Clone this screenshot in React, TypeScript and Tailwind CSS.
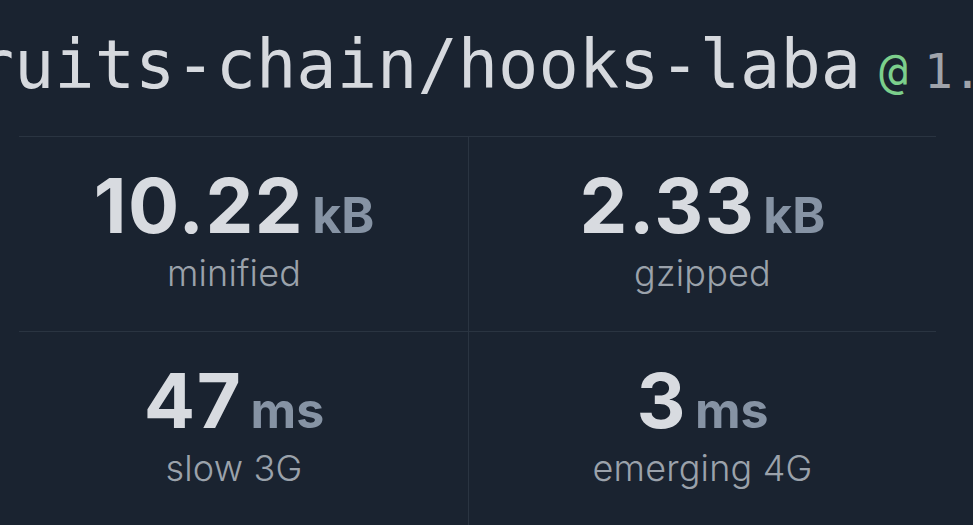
const stats = [
  [
    { value: '10.22', unit: 'kB', label: 'minified' },
    { value: '2.33', unit: 'kB', label: 'gzipped' }
  ],
  [
    { value: '47', unit: 'ms', label: 'slow 3G' },
    { value: '3', unit: 'ms', label: 'emerging 4G' }
  ]
]

// ─── Một ô thống kê ───────────────────────────────────────────────────────────
function StatCell({ value, unit, label, first }: { value: string; unit: string; label: string; first: boolean }) {
  return (
    <div
      className={`flex flex-col items-center pt-[30px] pb-10 ${first ? '' : 'border-l border-[#2a3441]'}`}
    >
      <div className="flex items-baseline leading-none">
        <span className="text-[76px] font-bold text-[#d8dbe0] tracking-[0.02em]">{value}</span>
        <span className="ml-2 text-[50px] font-bold text-[#8693a4]">{unit}</span>
      </div>
      <div className="mt-3 text-[36px] leading-none font-light tracking-[0.005em] text-[#9ba2ab]">{label}</div>
    </div>
  )
}

export default function App() {
  return (
    <div className="min-h-screen w-full bg-[#1a2330] overflow-hidden font-['Inter',sans-serif]">
      {/* Tên package */}
      <div className="pt-[32px] flex items-baseline whitespace-nowrap font-['DejaVu_Sans_Mono',monospace] leading-none -ml-[107px]">
        <span className="text-[67px] text-[#d6d9de]">@fruits-chain/hooks-laba</span>
        <span className="ml-[18px] mr-4 text-[48px] text-[#7ccf8c]">@</span>
        <span className="text-[48px] text-[#a0a4ab]">1.0.4</span>
      </div>

      {/* Bảng số liệu */}
      <div className="mt-[37px] w-[936px]">
        {stats.map((row, i) => (
          <div key={i}>
            <div className="ml-[19px] w-[917px] h-px bg-[#2a3441]" />
            <div className="grid grid-cols-2">
              {row.map((s, j) => (
                <StatCell key={s.label} {...s} first={j === 0} />
              ))}
            </div>
          </div>
        ))}
      </div>
    </div>
  )
}
